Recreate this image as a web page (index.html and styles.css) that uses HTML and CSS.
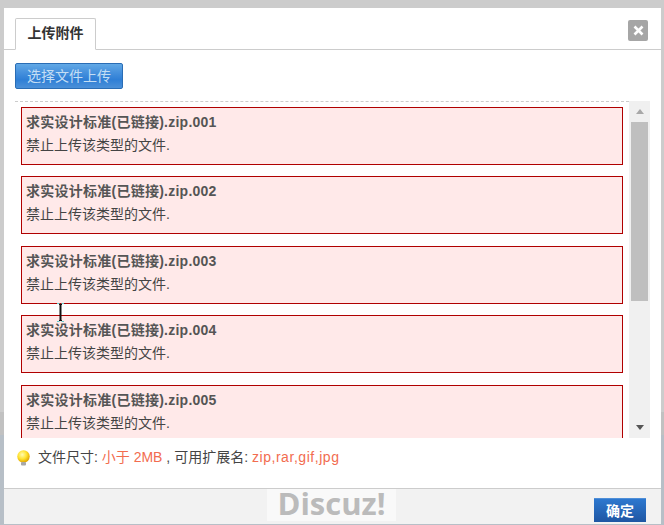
FILE: index.html
```html
<!DOCTYPE html>
<html lang="zh-CN">
<head>
    <meta charset="UTF-8">
    <title>上传附件</title>
    <link rel="stylesheet" href="styles.css">
</head>
<body>
    <div class="dialog">
        <div class="tabs">
            <div class="tab">上传附件</div>
            <a class="close" title="关闭">
                <svg width="11" height="11" viewBox="0 0 11 11"><path d="M1.5 1.5l8 8M9.5 1.5l-8 8" stroke="#fff" stroke-width="2.6"/></svg>
            </a>
        </div>
        <div class="content">
            <button class="upload-btn">选择文件上传</button>
            <div class="file-box">
                <ul class="file-list">
                    <li class="file-item">
                        <div class="file-name">求实设计标准(已链接).zip.001</div>
                        <div class="file-error">禁止上传该类型的文件.</div>
                    </li>
                    <li class="file-item">
                        <div class="file-name">求实设计标准(已链接).zip.002</div>
                        <div class="file-error">禁止上传该类型的文件.</div>
                    </li>
                    <li class="file-item">
                        <div class="file-name">求实设计标准(已链接).zip.003</div>
                        <div class="file-error">禁止上传该类型的文件.</div>
                    </li>
                    <li class="file-item">
                        <div class="file-name">求实设计标准(已链接).zip.004</div>
                        <div class="file-error">禁止上传该类型的文件.</div>
                    </li>
                    <li class="file-item">
                        <div class="file-name">求实设计标准(已链接).zip.005</div>
                        <div class="file-error">禁止上传该类型的文件.</div>
                    </li>
                </ul>
                <div class="scrollbar">
                    <div class="arrow"><span class="arrow-up"></span></div>
                    <div class="thumb"></div>
                    <div class="arrow arrow-bottom"><span class="arrow-down"></span></div>
                </div>
            </div>
            <div class="tips">
                <svg class="bulb" width="15" height="16" viewBox="0 0 15 16">
                    <defs>
                        <radialGradient id="glow" cx="0.4" cy="0.35" r="0.65">
                            <stop offset="0" stop-color="#fffbb0"/>
                            <stop offset="0.55" stop-color="#ffe22e"/>
                            <stop offset="1" stop-color="#e0a400"/>
                        </radialGradient>
                    </defs>
                    <circle cx="7.5" cy="6.5" r="6.2" fill="url(#glow)"/>
                    <rect x="5" y="12" width="5" height="3.5" rx="1" fill="#a8a8a8"/>
                </svg>
                <span>文件尺寸: <em>小于 2MB</em> , 可用扩展名: <em class="ext">zip,rar,gif,jpg</em></span>
            </div>
        </div>
        <div class="footer">
            <div class="watermark">Discuz!</div>
            <button class="ok-btn">确定</button>
        </div>
    </div>

    <svg class="text-cursor" width="9" height="19" viewBox="0 0 9 19">
        <path d="M1 .5h2.5M5.5 .5H8M1 18.5h2.5M5.5 18.5H8" stroke="#6cc" fill="none"/>
        <path d="M4.5 1v17" stroke="#111" stroke-width="2"/>
        <path d="M3 1.5h3M3 17.5h3" stroke="#111"/>
    </svg>
</body>
</html>
```

FILE: styles.css
```css
html, body {
    height: 525px;
    overflow: hidden;
}

body {
    margin: 0;
    position: relative;
    font-family: "Liberation Sans", "Noto Sans CJK SC", sans-serif;
    font-size: 14px;
    color: #444;
    background: linear-gradient(#ccc 0, #ccc 412px, #c1c1c1 412px, #c1c1c1 435px, #b7bfc7 435px);
}

.dialog {
    margin: 8px 3px 0 4px;
    height: 516px;
    display: flex;
    flex-direction: column;
    background-color: #fff;
}

.tabs {
    position: relative;
    height: 41px;
    flex: none;
    display: flex;
    align-items: flex-end;
    padding-left: 11px;
    border-bottom: 1px solid #ccc;
}

.tab {
    height: 30px;
    width: 79px;
    margin-bottom: -1px;
    border: 1px solid #ccc;
    border-bottom: 1px solid #fff;
    border-radius: 2px 2px 0 0;
    text-align: center;
    line-height: 29px;
    font-weight: bold;
    color: #333;
    background-color: #fff;
}

.close {
    position: absolute;
    top: 12px;
    right: 13px;
    width: 20px;
    height: 21px;
    display: flex;
    align-items: center;
    justify-content: center;
    border-radius: 2px;
    background-color: #a6a6a6;
}

.content {
    flex: 1;
    padding: 13px 11px 0;
}

.upload-btn {
    display: block;
    width: 108px;
    height: 26px;
    padding: 0;
    border: 1px solid #2a6db5;
    border-radius: 2px;
    background: linear-gradient(#62a9e6 0, #4a94de 30%, #2f7fd6 65%, #4b90d8 100%);
    color: #c4def4;
    font-family: inherit;
    font-size: 14px;
    line-height: 24px;
}

.file-box {
    display: flex;
    height: 337px;
    margin-top: 12px;
}

.file-list {
    width: 614px;
    flex: none;
    box-sizing: border-box;
    margin: 0;
    padding: 5px 6px 0;
    list-style: none;
    overflow: hidden;
    border-top: 1px dashed #ccc;
}

.file-item {
    height: 56px;
    margin-bottom: 11.4px;
    padding: 0 4px;
    border: 1px solid #b00000;
    background-color: #ffe9e9;
}

.file-name {
    line-height: 28px;
    font-weight: bold;
    letter-spacing: 0.25px;
    color: #555;
}

.file-error {
    line-height: 18px;
}

.scrollbar {
    width: 21px;
    display: flex;
    flex-direction: column;
    align-items: center;
    background-color: #f0f0f0;
}

.arrow {
    height: 21px;
    width: 100%;
    display: flex;
    align-items: center;
    justify-content: center;
}

.arrow-bottom {
    margin-top: auto;
}

.arrow-up {
    border: 4.5px solid transparent;
    border-top: 0;
    border-bottom: 5px solid #a8a8a8;
}

.arrow-down {
    border: 4.5px solid transparent;
    border-bottom: 0;
    border-top: 5px solid #555;
}

.thumb {
    width: 17px;
    height: 179px;
    background-color: #bfbfbf;
}

.tips {
    display: flex;
    align-items: center;
    height: 16px;
    margin-top: 12px;
    margin-left: 1px;
}

.tips span {
    margin-left: 7px;
    margin-bottom: 2px;
    line-height: 16px;
}

.tips em {
    font-style: normal;
    color: #f26c4f;
}

.tips .ext {
    letter-spacing: 0.55px;
}

.bulb {
    flex: none;
}

.footer {
    position: relative;
    flex: none;
    height: 35px;
    display: flex;
    justify-content: flex-end;
    align-items: flex-start;
    padding-right: 15px;
    border-top: 1px solid #ccc;
    background-color: #f2f2f2;
}

.watermark {
    position: absolute;
    left: 263px;
    top: 0;
    width: 129px;
    height: 32px;
    text-align: center;
    line-height: 28px;
    font-family: "Open Sans", sans-serif;
    font-size: 31px;
    font-weight: bold;
    color: #bbb;
    background-color: #f9f9f9;
}

.ok-btn {
    width: 52px;
    height: 24px;
    margin-top: 9px;
    padding: 0;
    border: 0;
    border-top: 1px solid #4f8fd8;
    background: linear-gradient(#2d78cf, #1f56a3);
    color: #fff;
    font-family: inherit;
    font-size: 14px;
    font-weight: bold;
    line-height: 22px;
}

.text-cursor {
    position: absolute;
    left: 56px;
    top: 303px;
}
```
